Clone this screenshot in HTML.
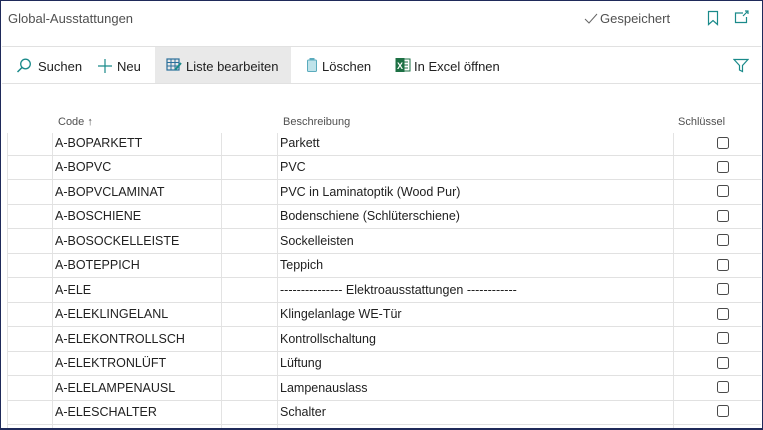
<!DOCTYPE html>
<html><head><meta charset="utf-8"><style>
*{margin:0;padding:0;box-sizing:border-box}
body{width:763px;height:430px;overflow:hidden;background:#fff;font-family:"Liberation Sans",sans-serif;color:#212121;position:relative}
.frame{position:absolute;left:0;top:0;width:763px;height:430px;border:1.5px solid #1f2a5a;border-bottom-width:2px}
.t{position:absolute;white-space:nowrap}
.hl{position:absolute;height:1px;background:#e1e1e1}
.vl{position:absolute;width:1px;background:#e3e3e3}
.cb{position:absolute;width:12px;height:12px;border:1px solid #4a4a4a;border-radius:2.5px;left:717px}
</style></head><body>
<div class="t" style="left:8px;top:11px;font-size:13px;color:#505050">Global-Ausstattungen</div>
<svg class="t" style="left:584px;top:13px" width="14" height="12"><path d="M1 6 L5 10 L13 1" stroke="#666" fill="none" stroke-width="1"/></svg>
<div class="t" style="left:600px;top:11px;font-size:13px;color:#505050">Gespeichert</div>
<svg class="t" style="left:707px;top:10px" width="12" height="16"><path d="M1.5 1.5 H10.5 V14.5 L6 10.5 L1.5 14.5 Z" stroke="#1a8a8a" fill="none" stroke-width="1.2"/></svg>
<svg class="t" style="left:734px;top:10px" width="16" height="14"><path d="M9 3 H1.5 V12.5 H12.5 V7" stroke="#1a8a8a" fill="none" stroke-width="1.2"/><path d="M9 6 L14 1 M11 1 H14 V4" stroke="#1a8a8a" fill="none" stroke-width="1.2"/></svg>
<div class="hl" style="left:2px;right:2px;top:46px"></div>
<div class="hl" style="left:2px;right:2px;top:83px"></div>
<div style="position:absolute;left:155px;top:47px;width:136px;height:36px;background:#e9e9e9"></div>
<svg class="t" style="left:16px;top:58px" width="16" height="16"><circle cx="9.5" cy="6" r="4.8" stroke="#1a8a8a" fill="none" stroke-width="1.3"/><path d="M6 9.5 L1.5 14" stroke="#1a8a8a" stroke-width="1.5"/></svg>
<div class="t" style="left:38px;top:59px;font-size:13px">Suchen</div>
<svg class="t" style="left:98px;top:59px" width="14" height="14"><path d="M7 0 V14 M0 7 H14" stroke="#1a8a8a" stroke-width="1.2"/></svg>
<div class="t" style="left:117px;top:59px;font-size:13px">Neu</div>
<svg class="t" style="left:166px;top:58px" width="16" height="14"><rect x="1" y="1" width="12" height="11" fill="none" stroke="#2a6f9a" stroke-width="1.2"/><path d="M1 4.5H13M1 8H13M5 1V12M9 1V12" stroke="#2a6f9a" stroke-width="1"/><path d="M9 12 L15 5" stroke="#1a8a8a" stroke-width="2"/></svg>
<div class="t" style="left:186px;top:59px;font-size:13px">Liste bearbeiten</div>
<svg class="t" style="left:306px;top:57px" width="12" height="16"><rect x="1.5" y="3" width="9" height="11.5" rx="1" fill="#bfe3ea" stroke="#5aabbd"/><rect x="3.5" y="1" width="5" height="2" fill="#5aabbd"/></svg>
<div class="t" style="left:322px;top:59px;font-size:13px">Löschen</div>
<svg class="t" style="left:395px;top:57px" width="16" height="16"><rect x="6" y="2" width="9" height="12" fill="#fff" stroke="#1d7044"/><path d="M8 5H13M8 8H13M8 11H13" stroke="#1d7044"/><rect x="0.5" y="1" width="9" height="14" fill="#1d7044"/><text x="2" y="12" font-size="9" fill="#fff" font-family="Liberation Sans" font-weight="bold">X</text></svg>
<div class="t" style="left:414px;top:59px;font-size:13px">In Excel öffnen</div>
<svg class="t" style="left:733px;top:58px" width="16" height="15"><path d="M1 1.5 H15 L9.5 7.5 V13.5 L6.5 12 V7.5 Z" stroke="#1a8a8a" fill="none" stroke-width="1.2"/></svg>
<div class="t" style="left:58px;top:116px;font-size:11px;color:#505050">Code ↑</div>
<div class="t" style="left:283px;top:116px;font-size:11px;color:#505050">Beschreibung</div>
<div class="t" style="left:678px;top:116px;font-size:11px;color:#505050">Schlüssel</div>
<div class="vl" style="left:7px;top:133px;height:297px"></div>
<div class="vl" style="left:52px;top:133px;height:297px"></div>
<div class="vl" style="left:221px;top:133px;height:297px"></div>
<div class="vl" style="left:277px;top:133px;height:297px"></div>
<div class="vl" style="left:673px;top:133px;height:297px"></div>
<div id="rows"></div>
<script>
var d=[["A-BOPARKETT","Parkett"],["A-BOPVC","PVC"],["A-BOPVCLAMINAT","PVC in Laminatoptik (Wood Pur)"],["A-BOSCHIENE","Bodenschiene (Schlüterschiene)"],["A-BOSOCKELLEISTE","Sockelleisten"],["A-BOTEPPICH","Teppich"],["A-ELE","--------------- Elektroausstattungen ------------"],["A-ELEKLINGELANL","Klingelanlage WE-Tür"],["A-ELEKONTROLLSCH","Kontrollschaltung"],["A-ELEKTRONLÜFT","Lüftung"],["A-ELELAMPENAUSL","Lampenauslass"],["A-ELESCHALTER","Schalter"]];
var h="";for(var i=0;i<d.length;i++){var y=136+i*24.45;
h+='<div class="t" style="left:55px;top:'+y+'px;font-size:12.5px">'+d[i][0]+'</div>';
h+='<div class="t" style="left:280px;top:'+y+'px;font-size:12.5px">'+d[i][1]+'</div>';
h+='<div class="cb" style="top:'+(y+0.5)+'px"></div>';
h+='<div class="hl" style="left:7px;right:2px;top:'+(y+19)+'px"></div>';}
document.getElementById("rows").innerHTML=h;
</script>
<div class="frame"></div>
</body></html>
